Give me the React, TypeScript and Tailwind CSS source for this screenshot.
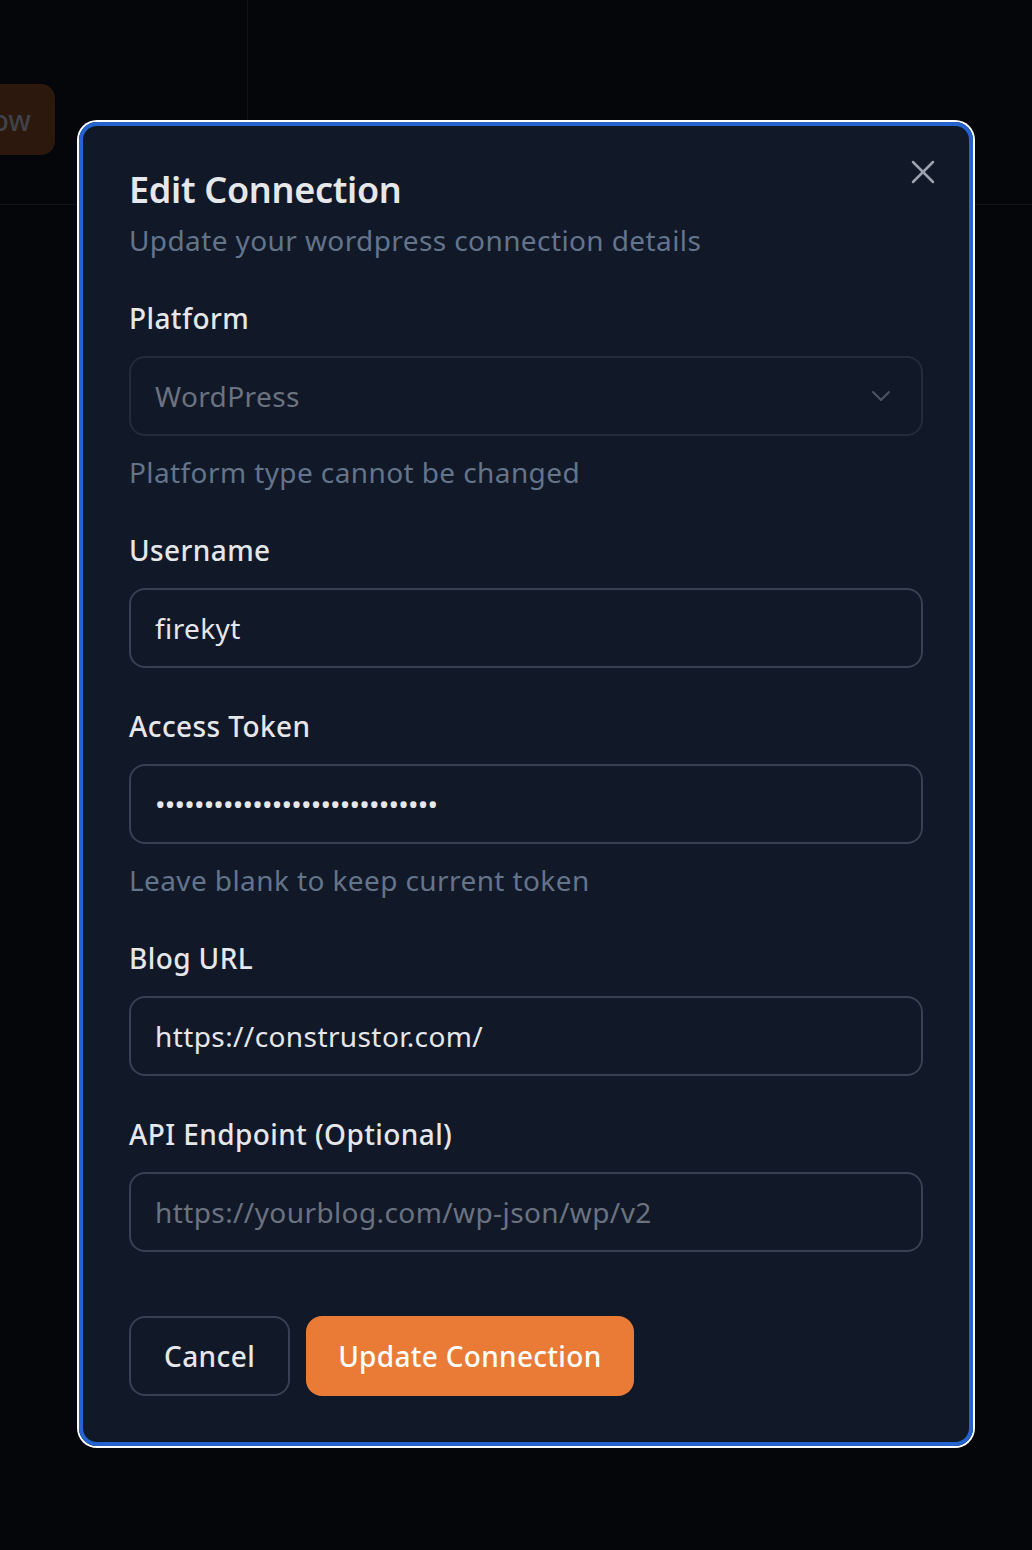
import { X, ChevronDown } from "lucide-react";

const font = { fontFamily: '"Noto Sans", "Open Sans", Arial, sans-serif' };

function Field({ label, children, hint }: { label: string; children: React.ReactNode; hint?: string }) {
  return (
    <div className="flex flex-col">
      <label className="text-[28px] leading-[40px] font-medium tracking-[0.4px] text-[#e5e7eb]">{label}</label>
      <div className="mt-[18px]">{children}</div>
      {hint && <p className="mt-[16px] text-[28px] leading-[40px] tracking-[0.4px] text-[#64748b]">{hint}</p>}
    </div>
  );
}

export default function App() {
  return (
    <div className="relative min-h-[1550px] w-full overflow-hidden bg-[#05060a]" style={font}>
      {/* page behind the overlay */}
      <header className="flex h-[205px] border-b border-[#111318]">
        <div className="flex w-[248px] shrink-0 items-start border-r border-[#111318]">
          <button className="ml-[-38px] mt-[84px] flex h-[71px] items-center rounded-[14px] bg-[#2c180c] pl-[8px] pr-[24px] text-[28px] font-medium text-[#3f4248]">
            Now
          </button>
        </div>
      </header>

      {/* dialog */}
      <div className="absolute inset-0 flex items-start justify-start">
        <div className="ml-[79px] mt-[122px] w-[894px] rounded-[18px] ring-2 ring-white">
          <div className="relative rounded-[18px] border-4 border-[#2563cf] bg-[#111827] px-[46px] pb-[46px] pt-[44px]">
            <button className="absolute right-[26px] top-[26px] text-[#9ca3af]">
              <X size={40} strokeWidth={1.5} />
            </button>

            <h2 className="text-[36px] leading-[40px] font-semibold tracking-[-0.3px] text-[#e5e7eb]">Edit Connection</h2>
            <p className="mt-[10px] text-[28px] leading-[40px] tracking-[0.4px] text-[#64748b]">
              Update your wordpress connection details
            </p>

            <div className="mt-[38px] flex flex-col gap-[38px]">
              <Field label="Platform" hint="Platform type cannot be changed">
                <div className="flex h-[80px] items-center justify-between rounded-[16px] border-2 border-[#232c3a] px-[24px]">
                  <span className="text-[28px] tracking-[0.4px] text-[#6b7280]">WordPress</span>
                  <ChevronDown size={32} strokeWidth={1.5} className="text-[#4b5563]" />
                </div>
              </Field>

              <Field label="Username">
                <input
                  readOnly
                  defaultValue="firekyt"
                  className="h-[80px] w-full rounded-[16px] border-2 border-[#374151] bg-transparent px-[24px] text-[28px] tracking-[0.4px] text-[#e5e7eb] outline-none"
                />
              </Field>

              <Field label="Access Token" hint="Leave blank to keep current token">
                <input
                  readOnly
                  type="password"
                  defaultValue="abcdefghijklmnopqrstuvwxyz123"
                  className="h-[80px] w-full rounded-[16px] border-2 border-[#374151] bg-transparent px-[24px] text-[28px] tracking-[-0.8px] text-[#e5e7eb] outline-none"
                />
              </Field>

              <Field label="Blog URL">
                <input
                  readOnly
                  defaultValue="https://construstor.com/"
                  className="h-[80px] w-full rounded-[16px] border-2 border-[#374151] bg-transparent px-[24px] text-[28px] tracking-[0.4px] text-[#e5e7eb] outline-none"
                />
              </Field>

              <Field label="API Endpoint (Optional)">
                <input
                  readOnly
                  placeholder="https://yourblog.com/wp-json/wp/v2"
                  className="h-[80px] w-full rounded-[16px] border-2 border-[#374151] bg-transparent px-[24px] text-[28px] tracking-[0.4px] text-[#e5e7eb] outline-none placeholder:text-[#6b7280]"
                />
              </Field>
            </div>

            <div className="mt-[64px] flex gap-[16px]">
              <button className="h-[80px] rounded-[16px] border-2 border-[#374151] px-[33px] text-[28px] font-medium tracking-[0.4px] text-[#e5e7eb]">
                Cancel
              </button>
              <button className="h-[80px] rounded-[16px] bg-[#ea7b36] px-[32px] text-[28px] font-medium tracking-[0.3px] text-white">
                Update Connection
              </button>
            </div>
          </div>
        </div>
      </div>
    </div>
  );
}
